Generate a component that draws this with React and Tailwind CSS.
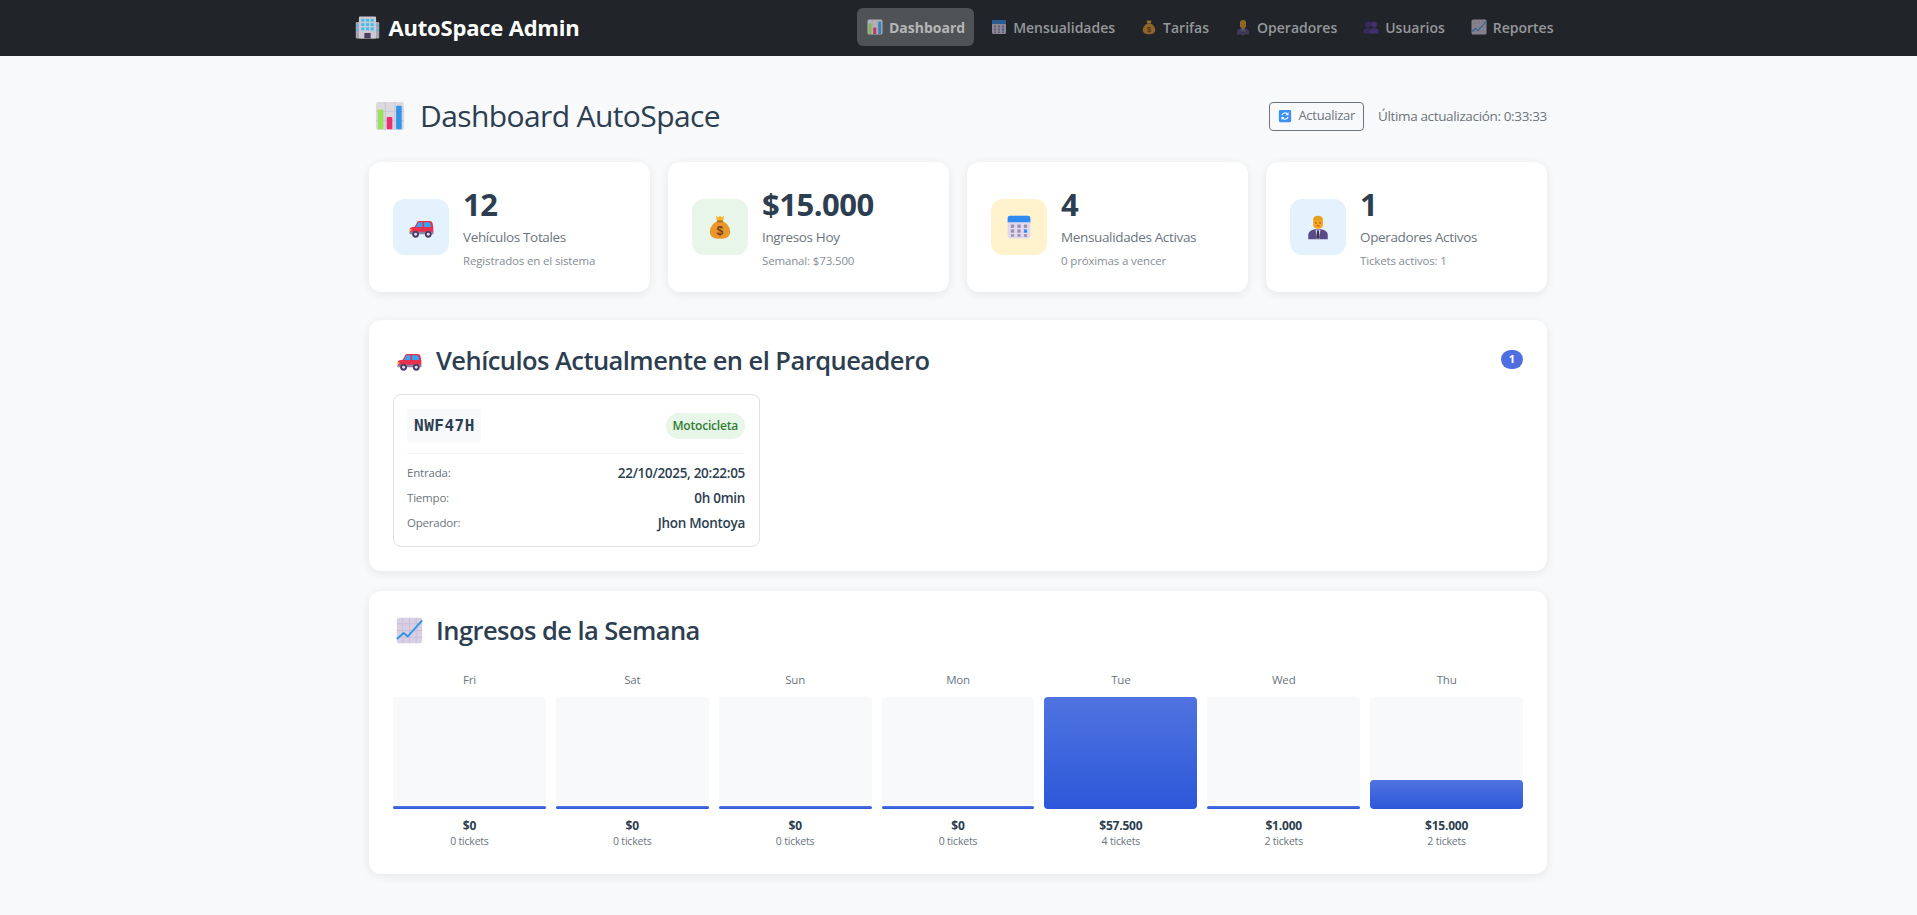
import React from "react";

const IconBuilding = ({ className }) => (
  <svg viewBox="0 0 32 32" className={className}>
    <rect x="1" y="9" width="30" height="21" rx="1.5" fill="#a8a3b0" />
    <rect x="5" y="2" width="22" height="28" rx="1.5" fill="#cdc8d2" />
    <g fill="#35c0f5">
      <rect x="8" y="5" width="4" height="3.5" /><rect x="14" y="5" width="4" height="3.5" /><rect x="20" y="5" width="4" height="3.5" />
      <rect x="8" y="10.5" width="4" height="3.5" /><rect x="14" y="10.5" width="4" height="3.5" /><rect x="20" y="10.5" width="4" height="3.5" />
      <rect x="8" y="16" width="4" height="3.5" /><rect x="14" y="16" width="4" height="3.5" /><rect x="20" y="16" width="4" height="3.5" />
      <rect x="2" y="12" width="2" height="3" /><rect x="2" y="18" width="2" height="3" /><rect x="28" y="12" width="2" height="3" /><rect x="28" y="18" width="2" height="3" />
    </g>
    <rect x="12" y="23" width="8" height="7" fill="#4a3f5c" />
  </svg>
);

const IconBars = ({ className }) => (
  <svg viewBox="0 0 32 32" className={className}>
    <rect x="1" y="1" width="30" height="30" rx="3" fill="#dcd8e0" />
    <path d="M11 1v30M21 1v30M1 11h30M1 21h30" stroke="#c6c0cc" strokeWidth="0.8" />
    <rect x="3" y="9" width="6" height="21" rx="1" fill="#9be05a" />
    <rect x="12.5" y="17" width="6" height="13" rx="1" fill="#e92f73" />
    <rect x="22.5" y="5" width="6" height="25" rx="1" fill="#2f95e8" />
  </svg>
);

const IconCar = ({ className }) => (
  <svg viewBox="0 0 32 32" className={className}>
    <path d="M2 18.5c0-1.5 1-2.5 2.500-2.800L8 15l3-5.500c.4-.8 1-1.200 2-1.200h13c1.500 0 2.500 1 3 2.500l1 5V23H2z" fill="#e8314f" />
    <path d="M9.500 15.500l2.500-5c.2-.4.600-.7 1.100-.7H17v5.700zM19 9.800h6c.8 0 1.300.5 1.500 1.200l1 4.500H19z" fill="#35a4f0" />
    <rect x="2" y="21" width="28" height="3" rx="1" fill="#8d86a8" />
    <rect x="1.500" y="18" width="2.500" height="2" fill="#ffc83d" />
    <circle cx="9" cy="24" r="4" fill="#4a3a66" /><circle cx="9" cy="24" r="1.700" fill="#e5e0ea" />
    <circle cx="24" cy="24" r="4" fill="#4a3a66" /><circle cx="24" cy="24" r="1.700" fill="#e5e0ea" />
  </svg>
);

const IconBag = ({ className }) => (
  <svg viewBox="0 0 32 32" className={className}>
    <path d="M12.500 9C7 12 3.500 17 3.500 22c0 5.500 5 8.500 12.500 8.500S28.500 27.500 28.500 22c0-5-3.500-10-9-13z" fill="#e9982a" />
    <path d="M11 2.500l3 1.500 2-2 2 2 3-1.500-1.500 6.500h-7z" fill="#f7b32b" />
    <rect x="12" y="8" width="8" height="2" rx="1" fill="#b86a1c" />
    <text x="16" y="26" textAnchor="middle" fontSize="15" fontWeight="700" fontFamily="Liberation Sans, sans-serif" fill="#7a3f1a">$</text>
  </svg>
);

const IconCalendar = ({ className }) => (
  <svg viewBox="0 0 32 32" className={className}>
    <rect x="2" y="2" width="28" height="28" rx="3" fill="#e2d8ee" />
    <path d="M2 10V5a3 3 0 013-3h22a3 3 0 013 3v5z" fill="#2e8cf0" />
    <g fill="#9a8fab">
      <rect x="6" y="13" width="4" height="4" /><rect x="14" y="13" width="4" height="4" /><rect x="22" y="13" width="4" height="4" />
      <rect x="6" y="19" width="4" height="4" /><rect x="14" y="19" width="4" height="4" />
      <rect x="6" y="25" width="4" height="3" /><rect x="14" y="25" width="4" height="3" /><rect x="22" y="25" width="4" height="3" />
    </g>
    <rect x="22" y="19" width="4" height="4" fill="#2e8cf0" />
  </svg>
);

const IconWorker = ({ className }) => (
  <svg viewBox="0 0 32 32" className={className}>
    <path d="M4 31v-5c0-4 3-6 7-7l5-1 5 1c4 1 7 3 7 7v5z" fill="#5b4a8a" />
    <path d="M13 19h6l-1.500 12h-3z" fill="#d9d4e2" />
    <path d="M15 20h2l1 9-2 2-2-2z" fill="#3c3350" />
    <rect x="10" y="3" width="12" height="15" rx="5" fill="#f5a623" />
    <path d="M10 8c0-4 2-6 6-6s6 2 6 6c-3 0-8-1-12 0z" fill="#e6a019" />
    <circle cx="13.500" cy="11" r="0.900" fill="#6d3a14" /><circle cx="18.500" cy="11" r="0.900" fill="#6d3a14" />
    <rect x="14" y="14" width="4" height="1.200" fill="#d2491f" />
  </svg>
);

const IconBusts = ({ className }) => (
  <svg viewBox="0 0 32 32" className={className}>
    <circle cx="10" cy="11" r="6" fill="#4a2f8a" />
    <path d="M1 29v-4c0-4 4-7 9-7s9 3 9 7v4z" fill="#4a2f8a" />
    <circle cx="22" cy="11" r="6" fill="#5c3a9e" />
    <path d="M13 29v-4c0-4 4-7 9-7s9 3 9 7v4z" fill="#5c3a9e" />
  </svg>
);

const IconChart = ({ className }) => (
  <svg viewBox="0 0 32 32" className={className}>
    <rect x="1" y="1" width="30" height="30" rx="3" fill="#d9cfe4" />
    <path d="M8 1v30M16 1v30M24 1v30M1 8h30M1 16h30M1 24h30" stroke="#c4b8d2" strokeWidth="0.8" />
    <path d="M1 26l8-7 5 4L31 4" fill="none" stroke="#2f95e8" strokeWidth="2.200" strokeLinejoin="round" />
  </svg>
);

const IconRefresh = ({ className }) => (
  <svg viewBox="0 0 32 32" className={className}>
    <rect x="2" y="2" width="28" height="28" rx="3" fill="#3d92f0" />
    <path d="M9 14a7 7 0 0112-3l2 2M23 18a7 7 0 01-12 3l-2-2" fill="none" stroke="#fff" strokeWidth="2.400" />
    <path d="M24 7v7h-7zM8 25v-7h7z" fill="#fff" />
  </svg>
);

const navItems = [
  { label: "Dashboard", Icon: IconBars, active: true },
  { label: "Mensualidades", Icon: IconCalendar },
  { label: "Tarifas", Icon: IconBag },
  { label: "Operadores", Icon: IconWorker },
  { label: "Usuarios", Icon: IconBusts },
  { label: "Reportes", Icon: IconChart },
];

const stats = [
  { value: "12", label: "Vehículos Totales", sub: "Registrados en el sistema", Icon: IconCar, bg: "bg-[#e3f2fd]", size: "w-[27px] h-[27px]" },
  { value: "$15.000", label: "Ingresos Hoy", sub: "Semanal: $73.500", Icon: IconBag, bg: "bg-[#e8f5e9]", size: "w-[26px] h-[26px]" },
  { value: "4", label: "Mensualidades Activas", sub: "0 próximas a vencer", Icon: IconCalendar, bg: "bg-[#fff3cd]", size: "w-[26px] h-[26px]" },
  { value: "1", label: "Operadores Activos", sub: "Tickets activos: 1", Icon: IconWorker, bg: "bg-[#e3f2fd]", size: "w-[26px] h-[26px]" },
];

const week = [
  { day: "Fri", amount: 0, tickets: 0 },
  { day: "Sat", amount: 0, tickets: 0 },
  { day: "Sun", amount: 0, tickets: 0 },
  { day: "Mon", amount: 0, tickets: 0 },
  { day: "Tue", amount: 57500, tickets: 4 },
  { day: "Wed", amount: 1000, tickets: 2 },
  { day: "Thu", amount: 15000, tickets: 2 },
];

const money = (n) => "$" + n.toString().replace(/\B(?=(\d{3})+(?!\d))/g, ".");

function StatCard({ value, label, sub, Icon, bg, size }) {
  return (
    <div className="bg-white rounded-[12px] shadow-[0_2px_10px_rgba(0,0,0,0.08)] h-[130px] px-6 flex items-center gap-[14px]">
      <div className={`w-[56px] h-[56px] rounded-[12px] flex items-center justify-center ${bg}`}>
        <Icon className={size} />
      </div>
      <div>
        <div className="text-[31px] leading-[37px] font-bold text-[#2c3e50] tracking-[-0.5px]">{value}</div>
        <div className="text-[13.500px] leading-[20px] mt-[4px] text-[#6c757d] tracking-[-0.35px]">{label}</div>
        <div className="text-[11.500px] leading-[16px] mt-[6px] text-[#868e96] tracking-[-0.15px]">{sub}</div>
      </div>
    </div>
  );
}

function Row({ label, value }) {
  return (
    <div className="flex justify-between items-center h-[25px]">
      <span className="text-[11.500px] text-[#6c757d] tracking-[-0.2px] -mt-[2px]">{label}</span>
      <span className="text-[13.500px] font-semibold text-[#2c3e50] tracking-[-0.3px]">{value}</span>
    </div>
  );
}

export default function App() {
  const max = Math.max(...week.map((d) => d.amount));

  return (
    <div className="min-h-[915px] bg-[#f8f9fa] font-['Open_Sans',sans-serif]">
      <nav className="h-[56px] bg-[#212529]">
        <div className="w-[1208px] mx-auto h-full pb-[2px] flex items-center justify-between">
          <div className="flex items-center gap-[9px]">
            <IconBuilding className="w-[25px] h-[25px]" />
            <span className="text-[22px] leading-[28px] font-bold text-white tracking-[-0.2px] -mt-[1px]">AutoSpace Admin</span>
          </div>
          <div className="flex items-center gap-[7px]">
            {navItems.map(({ label, Icon, active }) => (
              <div
                key={label}
                className={`h-[38px] pl-[10px] pr-[9px] rounded-[6px] flex items-center gap-[6px] text-[14px] ${
                  active ? "bg-[#4f5356] text-[#b5b6b8] font-bold" : "text-[#95979a] font-semibold"
                }`}
              >
                <Icon className={`w-[16px] h-[16px] ${active ? "opacity-70" : "opacity-55"}`} />
                {label}
              </div>
            ))}
          </div>
        </div>
      </nav>

      <div className="pr-[1px]">
        <main className="w-[1178px] mx-auto">
          <div className="flex items-center justify-between pt-[45px] pb-[31px] h-[106px]">
            <div className="flex items-center gap-[15px] pl-[6px]">
              <IconBars className="w-[30px] h-[30px]" />
              <h1 className="text-[30px] leading-[30px] font-medium text-[#2c3e50] tracking-[-0.6px]">Dashboard AutoSpace</h1>
            </div>
            <div className="flex items-center gap-[14px]">
              <button className="h-[29px] px-[8px] border border-[#6c757d] rounded-[4px] flex items-center gap-[6px] text-[13px] text-[#6c757d] tracking-[-0.3px]">
                <IconRefresh className="w-[14px] h-[14px]" />
                Actualizar
              </button>
              <span className="text-[13.500px] text-[#6c757d] tracking-[-0.35px] pt-[1px]">Última actualización: 0:33:33</span>
            </div>
          </div>

          <div className="grid grid-cols-4 gap-[18px]">
            {stats.map((s) => (
              <StatCard key={s.label} {...s} />
            ))}
          </div>

          <section className="mt-[28px] bg-white rounded-[12px] shadow-[0_2px_10px_rgba(0,0,0,0.08)] h-[251px] px-6 pt-[22px]">
            <div className="flex items-start justify-between h-[52px]">
              <div className="flex items-center gap-[13px] h-[36px] pl-[3px]">
                <IconCar className="w-[27px] h-[27px]" />
                <h2 className="text-[25.500px] font-semibold text-[#2c3e50] tracking-[-0.55px]">Vehículos Actualmente en el Parqueadero</h2>
              </div>
              <span className="mt-[8px] w-[22px] h-[19px] rounded-full bg-[#4e6fdf] text-white text-[11px] font-bold flex items-center justify-center">1</span>
            </div>
            <div className="w-[367px] h-[153px] border border-[#dee2e6] rounded-[8px] pl-[13px] pr-[14px] pt-[14px]">
              <div className="flex items-center justify-between h-[34px]">
                <span className="h-[34px] pl-[7px] pr-[6px] flex items-center bg-[#f8f9fa] rounded-[4px] font-['DejaVu_Sans_Mono',monospace] font-bold text-[16px] tracking-[0.5px] text-[#2c3e50]">NWF47H</span>
                <span className="h-[26px] px-[7px] rounded-full bg-[#e8f5e9] text-[#2e7d32] text-[12px] font-semibold flex items-center tracking-[-0.2px]">Motocicleta</span>
              </div>
              <div className="mt-[10px] pt-[7px] border-t border-[#f1f3f5]">
                <Row label="Entrada:" value="22/10/2025, 20:22:05" />
                <Row label="Tiempo:" value="0h 0min" />
                <Row label="Operador:" value="Jhon Montoya" />
              </div>
            </div>
          </section>

          <section className="mt-[20px] bg-white rounded-[12px] shadow-[0_2px_10px_rgba(0,0,0,0.08)] h-[283px] px-6 pt-[21px]">
            <div className="flex items-center gap-[13px] h-[36px] pl-[3px]">
              <IconChart className="w-[27px] h-[27px]" />
              <h2 className="text-[25.500px] font-semibold text-[#2c3e50] tracking-[-0.55px]">Ingresos de la Semana</h2>
            </div>
            <div className="mt-[24px] grid grid-cols-7 gap-[10px]">
              {week.map((d) => (
                <div key={d.day} className="text-center">
                  <div className="text-[11.500px] leading-[16px] text-[#6c757d] tracking-[-0.2px]">{d.day}</div>
                  <div className="mt-[9px] h-[112px] bg-[#f8f9fa] rounded-[4px] flex items-end">
                    <div
                      className="w-full rounded-[4px] bg-gradient-to-b from-[#5073e0] to-[#2c57d9]"
                      style={{ height: Math.max(3, (d.amount / max) * 112) }}
                    />
                  </div>
                  <div className="mt-[9px] text-[12px] leading-[16px] font-bold text-[#2c3e50] tracking-[-0.2px]">{money(d.amount)}</div>
                  <div className="text-[10.500px] leading-[15px] text-[#6c757d] tracking-[-0.2px]">{d.tickets} tickets</div>
                </div>
              ))}
            </div>
          </section>
        </main>
      </div>
    </div>
  );
}
